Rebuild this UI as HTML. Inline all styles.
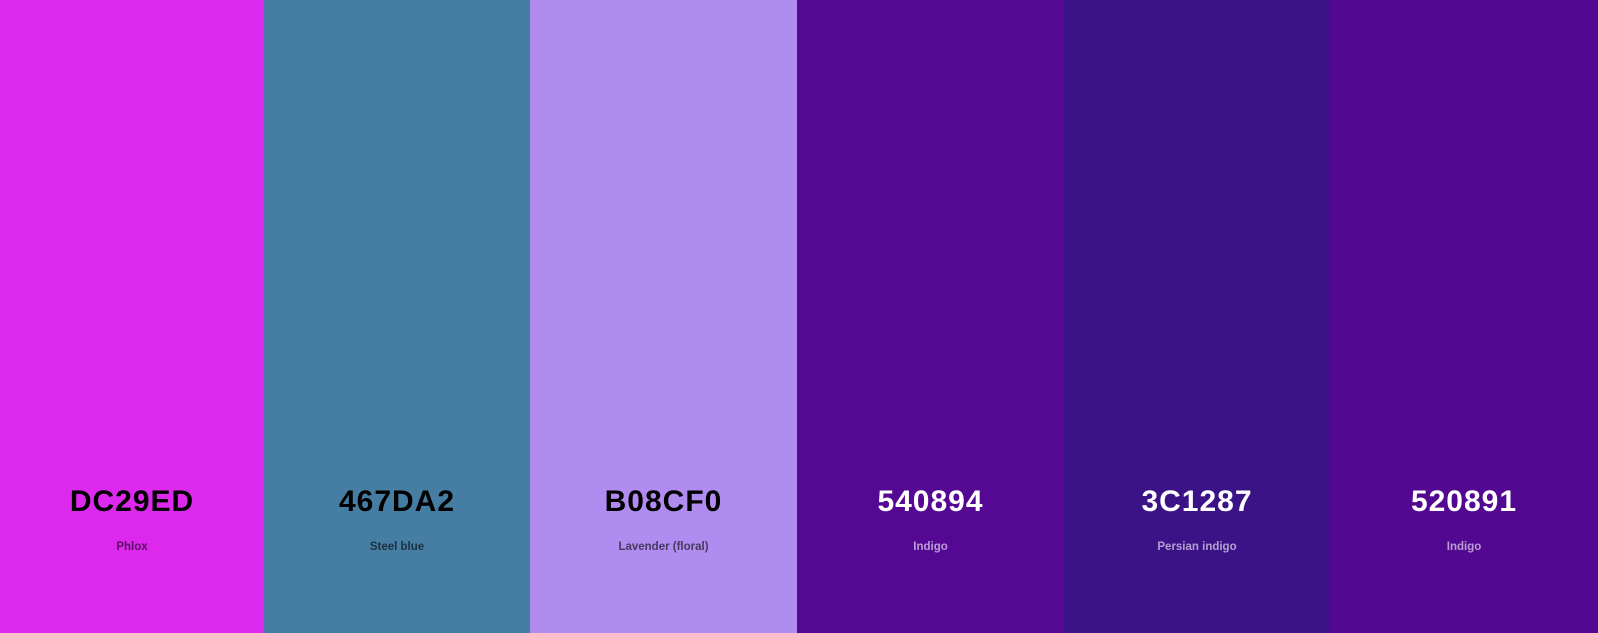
<!DOCTYPE html><html><head><style>
body{margin:0;width:1598px;height:633px;display:flex;font-family:"Liberation Sans",sans-serif}
.c{position:relative;flex:none}
.h{position:absolute;top:485px;width:100%;text-align:center;font-size:30px;font-weight:bold;letter-spacing:1px}
.n{position:absolute;top:541px;width:100%;text-align:center;font-size:11.5px;font-weight:bold;opacity:.6}
.d{color:#000}.l{color:#fff}
</style></head><body>
<div class="c d" style="background:#DC29ED;width:264px"><div class="h">DC29ED</div><div class="n">Phlox</div></div>
<div class="c d" style="background:#467DA2;width:266px"><div class="h">467DA2</div><div class="n">Steel blue</div></div>
<div class="c d" style="background:#B08CF0;width:267px"><div class="h">B08CF0</div><div class="n">Lavender (floral)</div></div>
<div class="c l" style="background:#540894;width:267px"><div class="h">540894</div><div class="n">Indigo</div></div>
<div class="c l" style="background:#3C1287;width:266px"><div class="h">3C1287</div><div class="n">Persian indigo</div></div>
<div class="c l" style="background:#520891;width:268px"><div class="h">520891</div><div class="n">Indigo</div></div>
</body></html>
